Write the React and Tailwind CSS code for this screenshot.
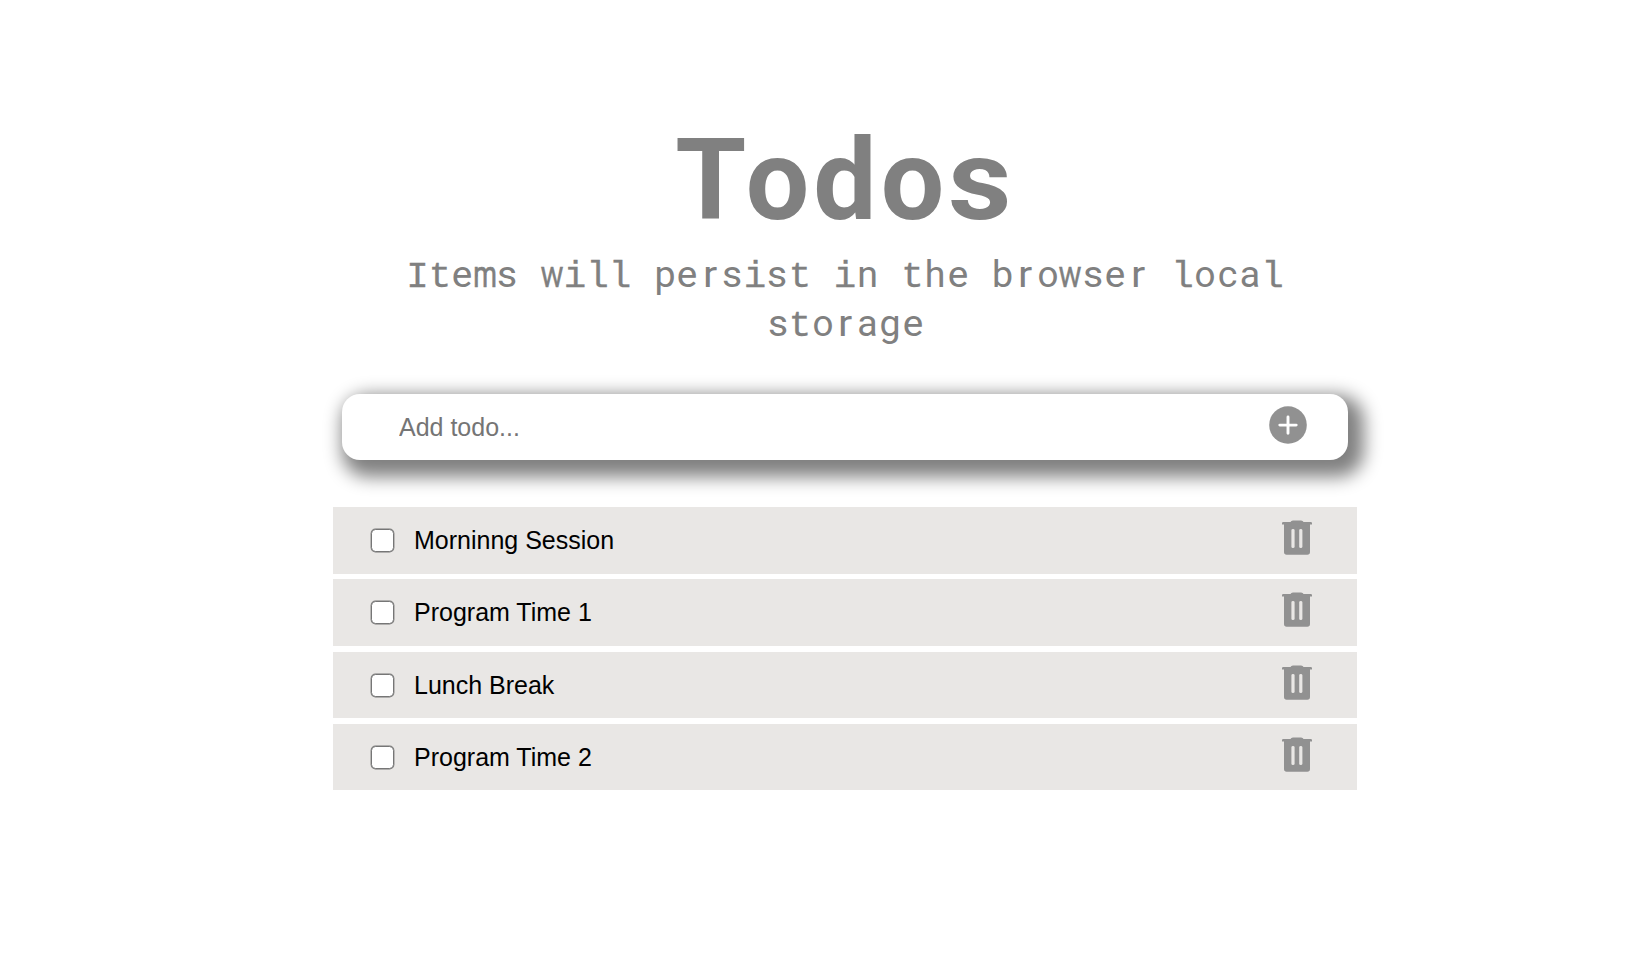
const GLYPH_STYLE = {
  m: 'scale-x-[0.72] [-webkit-text-stroke:0.7px_gray]',
  w: 'scale-x-[0.82] [-webkit-text-stroke:0.3px_gray]',
  r: 'scale-x-[1.12]',
  e: 'scale-x-[1.03]',
  o: 'scale-x-[0.98]',
  s: 'scale-x-[1.04]',
};

const SLAB = 'Iilt';

function MonoWord({ text }) {
  return (
    <span className="whitespace-nowrap">
      {text.split('').map((c, i) => (
        <span
          key={i}
          className={`inline-block w-[36px] -mx-[6.75px] text-center leading-[36px] ${
            SLAB.includes(c)
              ? 'font-["Liberation_Mono",monospace] [-webkit-text-stroke:0.3px_gray]'
              : 'font-[Roboto,sans-serif]'
          } ${GLYPH_STYLE[c] || ''}`}
        >
          {c}
        </span>
      ))}
    </span>
  );
}

const TITLE_STYLE = {
  T: 'scale-x-[1.02]',
  s: 'scale-x-[1.1]',
};

function Title({ text }) {
  return (
    <h1 className="h-[112px] text-center text-[112.5px] leading-[112px] font-bold whitespace-nowrap">
      {text.split('').map((c, i) => (
        <span
          key={i}
          className={`inline-block w-[67.5px] text-center font-[Roboto,sans-serif] ${TITLE_STYLE[c] || ''}`}
        >
          {c}
        </span>
      ))}
    </h1>
  );
}

function AddIcon() {
  return (
    <svg viewBox="0 0 38 38" className="size-[38px]">
      <circle cx="19" cy="19" r="18.8" fill="#919191" />
      <path d="M19 11v16.2M10.8 19.1h16.4" stroke="#fff" strokeWidth="2.9" strokeLinecap="round" />
    </svg>
  );
}

function TrashIcon() {
  return (
    <svg viewBox="0 0 30 35" className="h-[35px] w-[30px]">
      <path
        fill="#919191"
        fillRule="evenodd"
        d="M8.5 2 Q9 .5 11 .5 H19 Q21 .5 21.5 2 H28.8 Q30 2 30 3.2 V4.5 H28 V32 Q28 34.7 25.3 34.7 H4.7 Q2 34.7 2 32 V4.5 H0 V3.2 Q0 2 1.2 2 Z M9.4 10.3 V26.7 Q9.4 28 11 28 Q12.6 28 12.6 26.7 V10.3 Q12.6 9 11 9 Q9.4 9 9.4 10.3 Z M17.2 10.3 V26.7 Q17.2 28 18.8 28 Q20.4 28 20.4 26.7 V10.3 Q20.4 9 18.8 9 Q17.2 9 17.2 10.3 Z"
      />
    </svg>
  );
}

const TODOS = [
  { label: 'Morninng Session', size: 'h-[67px] mb-[5px]' },
  { label: 'Program Time 1', size: 'h-[67px] mb-[6px]' },
  { label: 'Lunch Break', size: 'h-[66px] mb-[6px]' },
  { label: 'Program Time 2', size: 'h-[66px]' },
];

export default function App() {
  return (
    <main className="h-[961px] overflow-hidden bg-white pt-[124px] pl-[333px] font-['Liberation_Sans',sans-serif] text-[25px] text-black">
      <div className="w-[1024px]">
        <header className="text-[#808080]">
          <Title text="Todos" />
          <p className="mt-[17px] h-[98px] text-center font-['Liberation_Mono',monospace] text-[37.5px] leading-[49px]">
            {['Items', 'will', 'persist', 'in', 'the', 'browser', 'local'].map((w) => (
              <span key={w}>
                <MonoWord text={w} />{' '}
              </span>
            ))}
            <br />
            <MonoWord text="storage" />
          </p>
        </header>
        <form className="mx-[9px] mt-[43px] flex h-[66px] items-start justify-between rounded-[18px] bg-white pr-[41px] pl-[57px] shadow-[8px_9px_18px_8px_gray]">
          <input
            placeholder="Add todo..."
            className="mt-[19px] h-[29px] w-[600px] bg-transparent outline-none placeholder:text-[#757575]"
          />
          <button type="button" className="mt-[11.5px]">
            <AddIcon />
          </button>
        </form>
        <ul className="mt-[47px]">
          {TODOS.map((t) => (
            <li key={t.label} className={`flex items-start bg-[#e9e7e5] pr-[45px] pl-[38px] ${t.size}`}>
              <input
                type="checkbox"
                className="mt-[22px] size-[22.5px] appearance-none rounded-[4.5px] border-[1.5px] border-[#767676] bg-white shadow-[0_0_0_0.4px_#767676]"
              />
              <span className="mt-[19px] ml-[20.5px] flex-1 leading-[29px]">{t.label}</span>
              <button type="button" className="mt-[13px]">
                <TrashIcon />
              </button>
            </li>
          ))}
        </ul>
      </div>
    </main>
  );
}
